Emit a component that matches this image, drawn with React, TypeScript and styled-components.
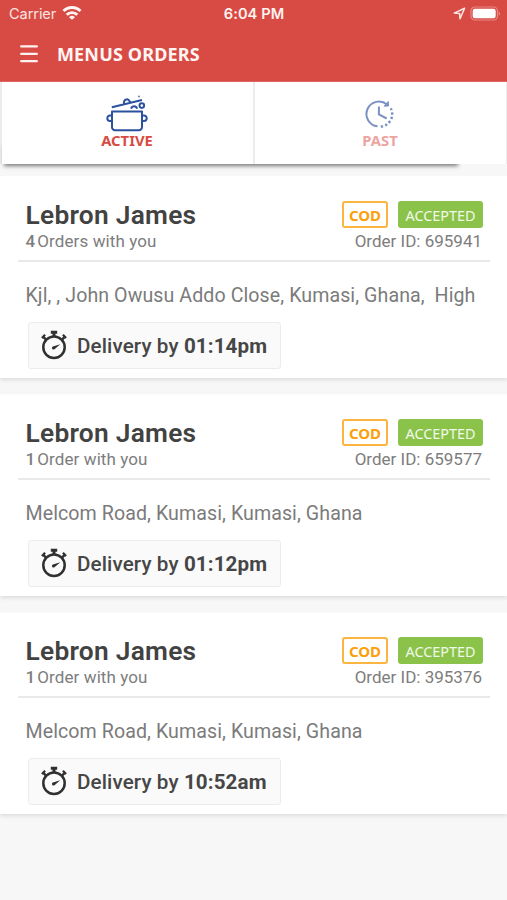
import React from "react";
import styled, { createGlobalStyle } from "styled-components";

const Global = createGlobalStyle`
  * { box-sizing: border-box; }
  body { margin: 0; background: #f7f7f7; font-family: Roboto, sans-serif; }
`;

const Screen = styled.main`
  width: 507px;
  height: 900px;
  overflow: hidden;
  background: #f7f7f7;
`;

const TopBar = styled.header`
  height: 82px;
  background: #d84b44;
  border-bottom: 1px solid #dc6761;
  color: #fff;
`;

const StatusBar = styled.div`
  display: grid;
  grid-template-columns: 1fr auto 1fr;
  align-items: center;
  height: 28px;
  padding: 0 6px 0 9px;
`;

const StatusGroup = styled.div<{ $end?: boolean }>`
  display: flex;
  align-items: center;
  gap: ${(p) => (p.$end ? "4px" : "6px")};
  justify-content: ${(p) => (p.$end ? "flex-end" : "flex-start")};
  svg { margin-top: -2px; }
`;

const Carrier = styled.span`
  font: 400 14.6px/28px Inter, sans-serif;
  letter-spacing: -0.1px;
  color: #fbe4e1;
`;

const Clock = styled.time`
  font: 600 14.6px/28px Inter, sans-serif;
  letter-spacing: 0.1px;
  margin-right: 2px;
  color: #fff3f1;
`;

const TitleRow = styled.div`
  display: flex;
  align-items: center;
  height: 52px;
  padding-left: 20px;
  gap: 19px;
`;

const Title = styled.h1`
  margin: 0;
  font: 700 18px/52px "Noto Sans", sans-serif;
  letter-spacing: 0.15px;
  color: #fff6f4;
`;

const Tabs = styled.nav`
  position: relative;
  z-index: 0;
  display: grid;
  grid-template-columns: 253px 1fr;
  height: 82px;
  border-left: 2px solid #ececef;
  border-right: 1px solid #ececef;
  &::after {
    content: "";
    position: absolute;
    z-index: -1;
    left: 2px;
    width: 454px;
    bottom: 0;
    height: 20px;
    box-shadow: 0 2px 4px rgba(0, 0, 0, 0.5);
  }
`;

const Tab = styled.button<{ $active?: boolean }>`
  display: flex;
  flex-direction: column;
  align-items: center;
  height: 82px;
  padding: 12px 1px 0 0;
  border: 0;
  border-right: ${(p) => (p.$active ? "2px solid #ececec" : "0")};
  background: #fff;
  svg { opacity: ${(p) => (p.$active ? 1 : 0.65)}; }
`;

const TabLabel = styled.span<{ $active?: boolean }>`
  margin-top: -1px;
  font: 700 14.8px/18px "Noto Sans", sans-serif;
  color: ${(p) => (p.$active ? "#d84b44" : "#eda4a1")};
`;

const List = styled.section`
  display: flex;
  flex-direction: column;
  gap: 16.2px;
  padding-top: 12px;
`;

const Card = styled.article`
  height: 202px;
  padding: 22px 17px 0 18px;
  background: #fff;
  box-shadow: 0 2px 4px rgba(0, 0, 0, 0.11);
  clip-path: inset(0 0 -8px 0);
`;

const Heading = styled.div`
  height: 64px;
  padding: 0 7px 0 7.5px;
  border-bottom: 2px solid #e9e9e9;
`;

const HeadRow = styled.div<{ $height: number }>`
  display: flex;
  align-items: center;
  justify-content: space-between;
  height: ${(p) => p.$height}px;
`;

const Name = styled.h2`
  margin: 0;
  font: 600 26.3px/34px Roboto, sans-serif;
  letter-spacing: 0.27px;
  color: #424242;
`;

const Badges = styled.div`
  display: flex;
  gap: 10px;
  margin-top: -1px;
`;

const Badge = styled.span<{ $solid?: boolean }>`
  display: flex;
  align-items: center;
  justify-content: center;
  width: ${(p) => (p.$solid ? 85 : 46)}px;
  height: 27px;
  border-radius: 3px;
  border: ${(p) => (p.$solid ? "0" : "2px solid #fbb540")};
  background: ${(p) => (p.$solid ? "#8bc34a" : "#fff")};
  color: ${(p) => (p.$solid ? "#f1f9e8" : "#fb9f0b")};
  font: ${(p) => (p.$solid ? "400 14.4px" : "700 15px")}/23px "Noto Sans", sans-serif;
  padding-top: 1px;
`;

const Meta = styled.span`
  font: 400 17px/20px Roboto, sans-serif;
  letter-spacing: 0.1px;
  color: #7d7d7d;
`;

const OrderId = styled(Meta)`
  letter-spacing: 0;
  padding-right: 1px;
`;

const Count = styled.b`
  font-weight: 500;
  margin-right: 2px;
`;

const Address = styled.p`
  margin: 0;
  padding: 21.5px 0 0 7.5px;
  font: 400 19.6px/24px Roboto, sans-serif;
  letter-spacing: 0.08px;
  color: #7b7b7b;
  white-space: pre;
`;

const Delivery = styled.div`
  display: flex;
  align-items: center;
  gap: 10.5px;
  width: 253px;
  height: 47px;
  margin: 14px 0 0 10px;
  padding-left: 11.5px;
  border: 1px solid #ececec;
  border-radius: 3px;
  background: #fafafa;
  color: #464646;
  font: 500 20.6px/46px Roboto, sans-serif;
  letter-spacing: 0.12px;
  white-space: nowrap;
  span { padding-top: 2px; }
  b { font-weight: 700; }
`;

const WifiIcon = () => (
  <svg width="20" height="16" viewBox="0 0 20 16" fill="none" stroke="#fff5f3" strokeWidth="2.9">
    <path d="M1.5 6.1a12 12 0 0 1 17 0M4.7 9.8a7.5 7.5 0 0 1 10.6 0" />
    <path d="M10 14.7 7 12.2a4.3 4.3 0 0 1 6 0Z" fill="#fff5f3" stroke="none" />
  </svg>
);

const LocationIcon = () => (
  <svg width="13" height="13" viewBox="0 0 13 13" fill="none" stroke="#ffe9e6" strokeWidth="1.5" strokeLinejoin="round">
    <path d="M1.3 6.1 11.6 1.3 7 11.8 6.6 6.5Z" />
  </svg>
);

const BatteryIcon = () => (
  <svg width="31" height="15" viewBox="0 0 31 15">
    <rect x="1" y="1" width="26.5" height="13" rx="4" fill="none" stroke="#e58a84" strokeWidth="1.2" />
    <rect x="2.7" y="2.7" width="23" height="9.6" rx="2.2" fill="#fff" />
    <path d="M28.8 5.2q2.4 2.3 0 4.6Z" fill="#f08d90" />
  </svg>
);

const MenuIcon = () => (
  <svg width="18" height="20" viewBox="0 0 18 20" stroke="#fff1ee" strokeWidth="2.3" strokeLinecap="round">
    <path d="M1.2 2.4h15.6M1.2 9.9h15.6M1.2 17.2h15.6" />
  </svg>
);

const PotIcon = () => (
  <svg width="42" height="38" viewBox="0 0 42 38" fill="none" stroke="#2b519f" strokeWidth="2" strokeLinejoin="round">
    <path d="M6 17.5h30v15.7a3 3 0 0 1-3 3H9a3 3 0 0 1-3-3Z" />
    <path d="M5.5 21.5H4a2.5 2.5 0 0 0 0 5.4h1.5M36.5 21.5H38a2.5 2.5 0 0 1 0 5.4h-1.5" />
    <path d="M5.8 13.2 36 6M18 9.9c-.7-5.5 5.3-6 5.9-1.5M25 14.7c1.2-3.3 5-3.3 6.2 0" />
    <circle cx="35.8" cy="11.6" r="2.3" />
    <circle cx="33" cy="2.5" r="1.1" fill="#7189bd" stroke="none" />
  </svg>
);

const PastIcon = () => (
  <svg width="42" height="38" viewBox="0 0 42 38" fill="none" stroke="#3657a8" strokeWidth="2">
    <path d="M18.500 32.300A12.400 12.400 0 1 1 28 10.600" />
    <path d="m29.200 7.500.4 4.400-4.400.3Z" fill="#3657a8" strokeWidth="1" />
    <path d="M31.700 14.300A12.400 12.400 0 0 1 20.500 32.600" strokeWidth="2.5" strokeDasharray="2.2 2.2" />
    <path d="M19.900 12.500v8l7.800 4" />
  </svg>
);

const StopwatchIcon = () => (
  <svg width="26" height="30" viewBox="0 0 26 30" fill="none" stroke="#303030" strokeWidth="2.5">
    <circle cx="13" cy="17.3" r="10.7" />
    <path d="M13 7V2.8M9.8 2.3h6.4" strokeWidth="3" />
    <path d="m4.800 9.300-2.300-2.200M21.200 9.300l2.300-2.200" />
    <path d="m.9 8 3.200-3.200M25.100 8l-3.200-3.200" strokeWidth="2.2" />
    <path d="m19.300 14.300-5.200 4.500a1.700 1.700 0 1 1-1.400-2.600Z" fill="#303030" stroke="none" />
  </svg>
);

interface Order {
  id: string;
  count: number;
  address: string;
  time: string;
}

const orders: Order[] = [
  { id: "695941", count: 4, address: "Kjl, , John Owusu Addo Close, Kumasi, Ghana,  High", time: "01:14pm" },
  { id: "659577", count: 1, address: "Melcom Road, Kumasi, Kumasi, Ghana", time: "01:12pm" },
  { id: "395376", count: 1, address: "Melcom Road, Kumasi, Kumasi, Ghana", time: "10:52am" },
];

const OrderCard = ({ order }: { order: Order }) => (
  <Card>
    <Heading>
      <HeadRow $height={34}>
        <Name>Lebron James</Name>
        <Badges>
          <Badge>COD</Badge>
          <Badge $solid>ACCEPTED</Badge>
        </Badges>
      </HeadRow>
      <HeadRow $height={18}>
        <Meta><Count>{order.count}</Count>{order.count === 1 ? "Order" : "Orders"} with you</Meta>
        <OrderId>Order ID: {order.id}</OrderId>
      </HeadRow>
    </Heading>
    <Address>{order.address}</Address>
    <Delivery>
      <StopwatchIcon />
      <span>Delivery by <b>{order.time}</b></span>
    </Delivery>
  </Card>
);

export default function App() {
  return (
    <Screen>
      <Global />
      <TopBar>
        <StatusBar>
          <StatusGroup><Carrier>Carrier</Carrier><WifiIcon /></StatusGroup>
          <Clock>6:04 PM</Clock>
          <StatusGroup $end><LocationIcon /><BatteryIcon /></StatusGroup>
        </StatusBar>
        <TitleRow><MenuIcon /><Title>MENUS ORDERS</Title></TitleRow>
      </TopBar>
      <Tabs>
        <Tab $active><PotIcon /><TabLabel $active>ACTIVE</TabLabel></Tab>
        <Tab><PastIcon /><TabLabel>PAST</TabLabel></Tab>
      </Tabs>
      <List>
        {orders.map((order) => <OrderCard key={order.id} order={order} />)}
      </List>
    </Screen>
  );
}
